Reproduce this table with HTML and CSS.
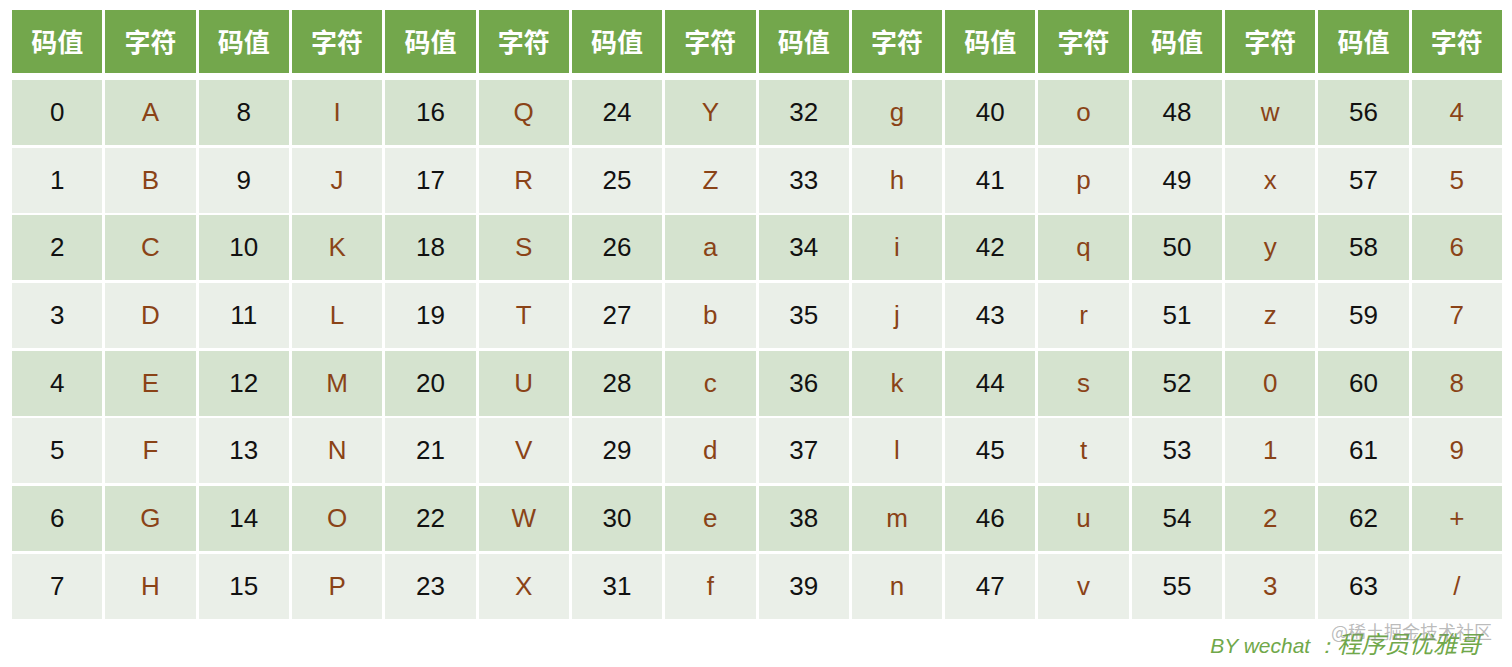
FILE: index.html
```html
<!DOCTYPE html>
<html lang="zh">
<head>
<meta charset="utf-8">
<title>Base64 编码表</title>
<link rel="stylesheet" href="styles.css">
</head>
<body>
<div class="page">
  <div class="table">
    <div class="grid head">
      <div class="th">码值</div><div class="th">字符</div>
      <div class="th">码值</div><div class="th">字符</div>
      <div class="th">码值</div><div class="th">字符</div>
      <div class="th">码值</div><div class="th">字符</div>
      <div class="th">码值</div><div class="th">字符</div>
      <div class="th">码值</div><div class="th">字符</div>
      <div class="th">码值</div><div class="th">字符</div>
      <div class="th">码值</div><div class="th">字符</div>
    </div>
    <div class="grid body" id="tbody"></div>
  </div>
  <div class="footer">
    <span class="credit"><span class="latin">BY wechat ：</span><span class="cjk">程序员优雅哥</span></span>
    <span class="watermark">@稀土掘金技术社区</span>
  </div>
</div>
<script src="script.js"></script>
</body>
</html>
```
FILE: script.js
```js
(function () {
  var chars = "ABCDEFGHIJKLMNOPQRSTUVWXYZabcdefghijklmnopqrstuvwxyz0123456789+/";
  var body = document.getElementById("tbody");
  for (var r = 0; r < 8; r++) {
    for (var c = 0; c < 8; c++) {
      var v = c * 8 + r;
      var rowCls = r % 2 === 0 ? "dark" : "light";
      var a = document.createElement("div");
      a.className = "td num " + rowCls;
      a.textContent = String(v);
      var b = document.createElement("div");
      b.className = "td chr " + rowCls;
      b.textContent = chars.charAt(v);
      body.appendChild(a);
      body.appendChild(b);
    }
  }
})();
```
FILE: styles.css
```css
html, body {
  margin: 0;
  padding: 0;
  background: #ffffff;
}
.page {
  padding: 10px 10px 0 12px;
  width: 1490px;
}
.table {
  display: flex;
  flex-direction: column;
  gap: 7px;
}
.grid {
  display: grid;
  grid-template-columns: repeat(16, 1fr);
  column-gap: 3px;
  row-gap: 3px;
}
.head {
  grid-template-rows: 63px;
}
.body {
  grid-template-rows: repeat(8, 65px);
  row-gap: 2.7px;
}
.th {
  background: #73a74c;
  color: #ffffff;
  font-family: "Noto Sans CJK SC", sans-serif;
  font-weight: 700;
  font-size: 26px;
  display: flex;
  align-items: center;
  justify-content: center;
  padding-bottom: 2px;
}
.td {
  display: flex;
  align-items: center;
  justify-content: center;
  font-family: "Liberation Sans", Arial, sans-serif;
  font-size: 26px;
  color: #111111;
}
.dark { background: #d5e3cf; }
.light { background: #eaefe8; }
.chr { color: #8a4317; }
.footer {
  position: relative;
  display: flex;
  justify-content: flex-end;
  padding: 10px 21px 0 0;
  height: 37px;
}
.credit {
  color: #70a84a;
  font-style: italic;
  line-height: 28px;
}
.latin {
  font-family: "Liberation Sans", Arial, sans-serif;
  font-size: 21px;
}
.cjk {
  font-family: "Noto Sans CJK SC", sans-serif;
  font-size: 24px;
}
.watermark {
  position: absolute;
  right: 10px;
  top: -1px;
  font-family: "Noto Sans CJK SC", sans-serif;
  font-size: 18px;
  color: rgba(130, 130, 130, 0.55);
  line-height: 26px;
}
```
